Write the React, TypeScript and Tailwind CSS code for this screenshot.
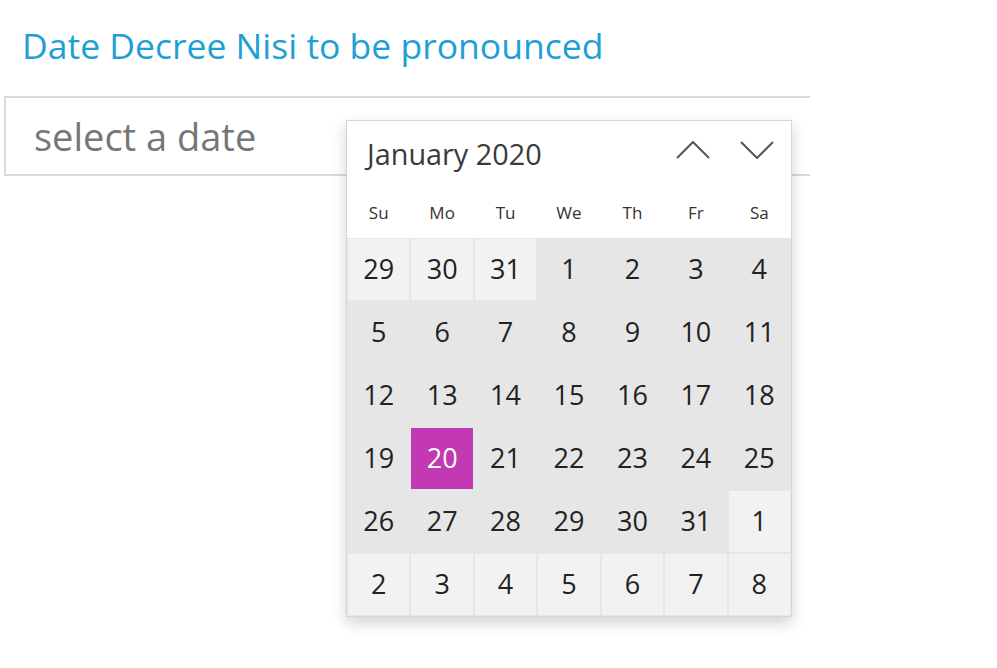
const weekdays = ["Su", "Mo", "Tu", "We", "Th", "Fr", "Sa"];

// 6 weeks shown, Jan 2020 starts on a Wednesday
const days: { d: number; inMonth: boolean }[] = [
  ...[29, 30, 31].map((d) => ({ d, inMonth: false })),
  ...Array.from({ length: 31 }, (_, i) => ({ d: i + 1, inMonth: true })),
  ...Array.from({ length: 8 }, (_, i) => ({ d: i + 1, inMonth: false })),
];

function Chevron({ up }: { up?: boolean }) {
  return (
    <svg width="34" height="18" viewBox="0 0 34 18" fill="none" stroke="#555" strokeWidth="2">
      <polyline points={up ? "1,17 17,1 33,17" : "1,1 17,17 33,1"} />
    </svg>
  );
}

function Calendar() {
  return (
    <div className="absolute left-[342px] top-[24px] w-[446px] bg-white border border-[#d6d6d6] shadow-[0_6px_14px_rgba(0,0,0,0.18)]">
      <div className="h-[66px] flex items-center justify-between pl-[20px] pr-[17px]">
        <span className="text-[28.8px] text-[#3a3a3a]">January 2020</span>
        <div className="flex items-center gap-[30px] mb-[8px]">
          <Chevron up />
          <Chevron />
        </div>
      </div>
      <div className="h-[51px] grid grid-cols-7 items-center text-center text-[17px] text-[#333]">
        {weekdays.map((w) => (
          <span key={w}>{w}</span>
        ))}
      </div>
      <div className="grid grid-cols-7 grid-rows-6 gap-[2px] p-px bg-[#e6e6e6] h-[378px]">
        {days.map((day, i) => {
          const selected = day.inMonth && day.d === 20;
          return (
            <div
              key={i}
              className={`flex items-center justify-center text-[27px] ${
                selected
                  ? "bg-[#c239b3] text-white"
                  : day.inMonth
                  ? "text-[#222]"
                  : "bg-[#f2f2f2] text-[#222]"
              }`}
            >
              {day.d}
            </div>
          );
        })}
      </div>
    </div>
  );
}

export default function App() {
  return (
    <div className="min-h-screen bg-white" style={{ fontFamily: '"Open Sans", "Noto Sans", sans-serif' }}>
      <div className="pt-[21px] pl-[22px] text-[35.5px] leading-[48px] text-[#1ea0d5]">
        Date Decree Nisi to be pronounced
      </div>
      <div className="relative mt-[27px] ml-[4px] w-[806px]">
        <div className="h-[80px] border-2 border-r-0 border-[#d9d9d9] flex items-center pl-[28px]">
          <span className="text-[38px] text-[#767676]">select a date</span>
        </div>
        <Calendar />
      </div>
    </div>
  );
}
